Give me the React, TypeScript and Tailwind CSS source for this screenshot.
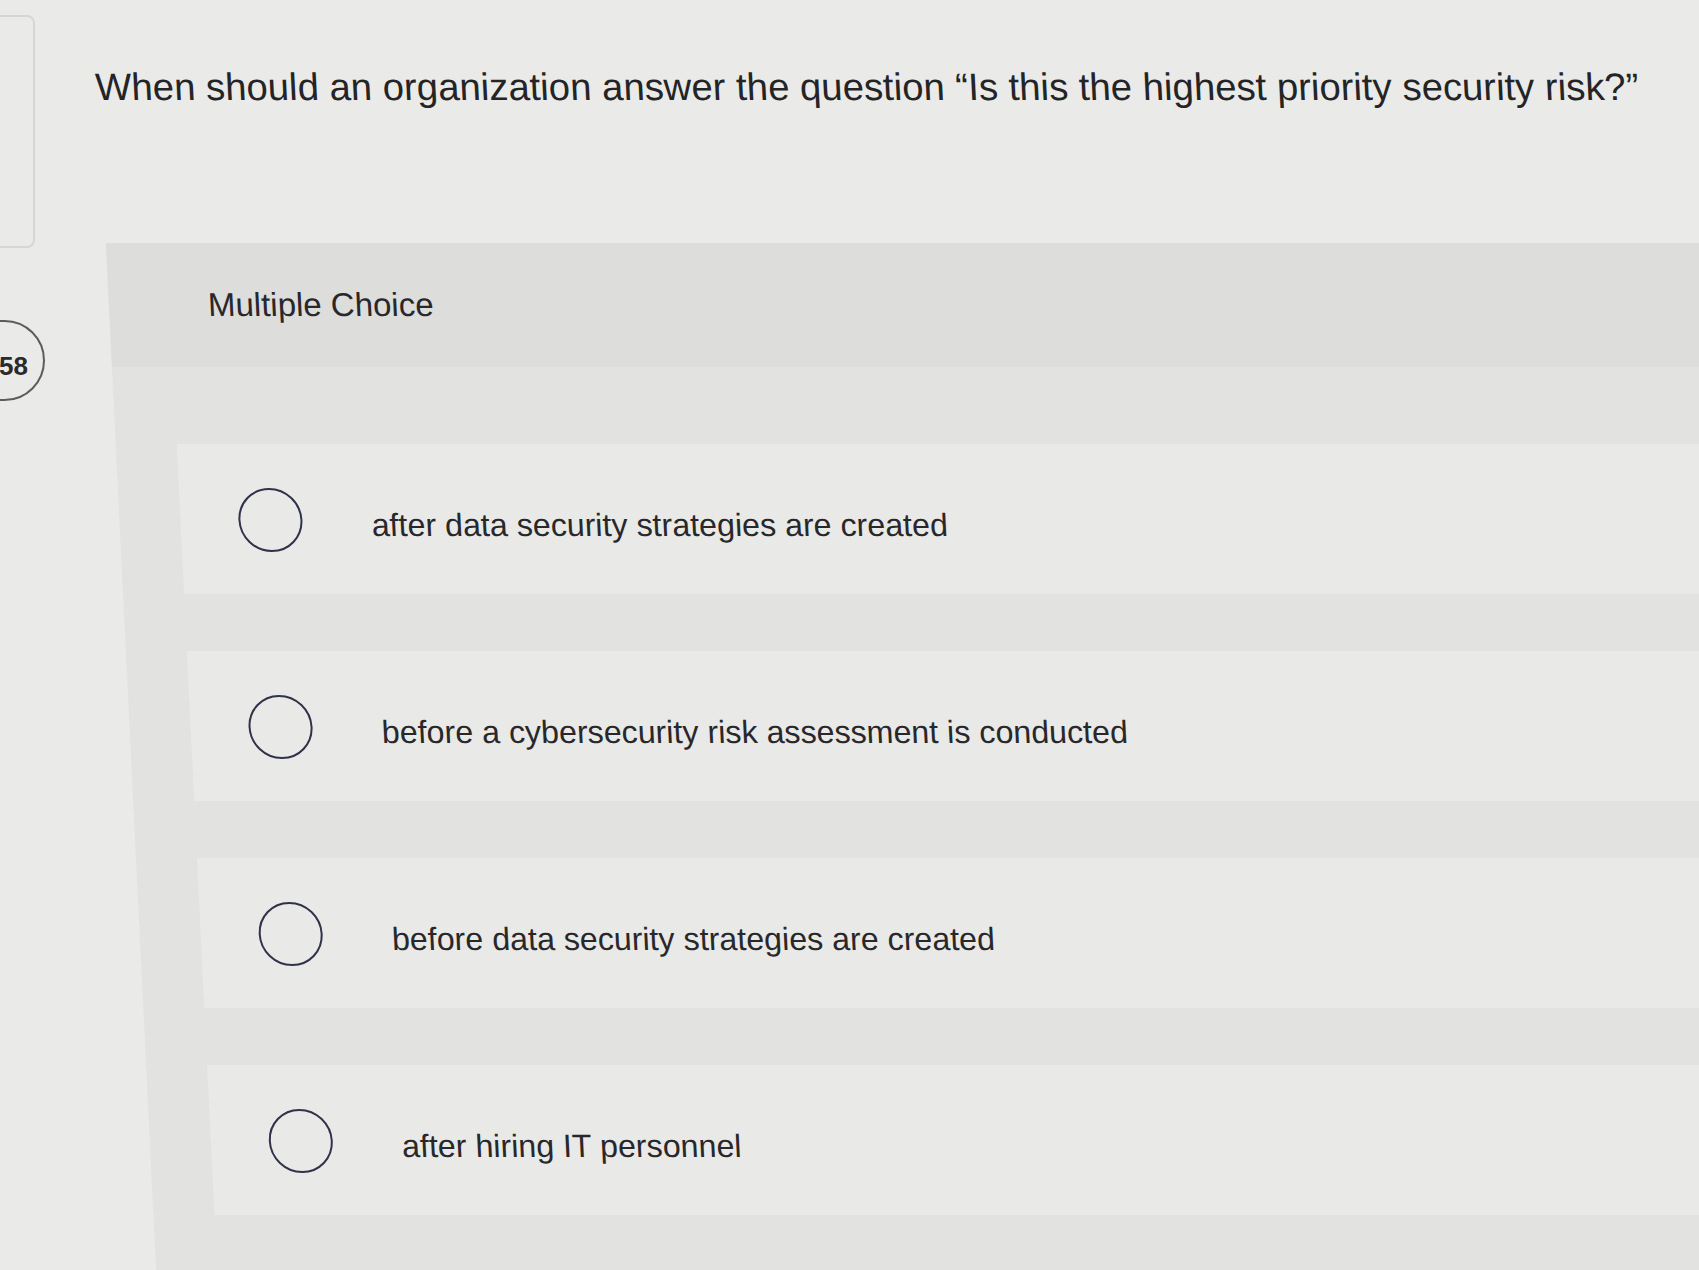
import React from "react";

interface Option {
  id: string;
  label: string;
}

const options: Option[] = [
  { id: "a", label: "after data security strategies are created" },
  { id: "b", label: "before a cybersecurity risk assessment is conducted" },
  { id: "c", label: "before data security strategies are created" },
  { id: "d", label: "after hiring IT personnel" },
];

const App: React.FC = () => {
  return (
    <div
      className="relative h-[1270px] w-full overflow-hidden bg-[#eaeae8] text-[#26262a]"
      style={{ fontFamily: '"Liberation Sans", Arial, sans-serif' }}
    >
      {/* sidebar bits, cut off by the left edge */}
      <div className="absolute -left-4 top-[15px] h-[233px] w-[51px] rounded-lg border-2 border-[#d6d6d3]" />
      <div className="absolute -left-[45px] top-[320px] flex h-[81px] w-[90px] items-center justify-end rounded-full border-2 border-[#5c5c5c] pr-[15px] pt-[10px]">
        <span className="text-[26px] font-bold leading-none text-[#2b2b2b]">58</span>
      </div>

      {/* the photo is taken at a slight angle, so the content leans */}
      <div className="origin-top-left skew-x-[2.8deg]">
        <h1 className="ml-[91px] pt-[65px] text-[38.3px] leading-[44px] text-[#242427]">
          When should an organization answer the question “Is this the highest priority security risk?”
        </h1>

        <div className="ml-[94px] mt-[134px] bg-[#e2e2e0]">
          <div className="bg-[#dddddb] py-11 pl-[99px]">
            <h2 className="text-[33px] leading-[36px] text-[#28282b]">Multiple Choice</h2>
          </div>

          <div className="flex flex-col gap-[57px] pb-24 pl-[61px] pt-[77px]">
            {options.map((option) => (
              <label
                key={option.id}
                className="flex h-[150px] cursor-pointer items-center bg-[#e9e9e7] pl-[58px] pt-[2px]"
              >
                <span className="h-[64px] w-[64px] shrink-0 rounded-full border-[2.5px] border-[#30324a]" />
                <span className="ml-[69px] mt-[10px] text-[32.2px] leading-[40px] text-[#28282b]">
                  {option.label}
                </span>
              </label>
            ))}
          </div>
        </div>
      </div>
    </div>
  );
};

export default App;
